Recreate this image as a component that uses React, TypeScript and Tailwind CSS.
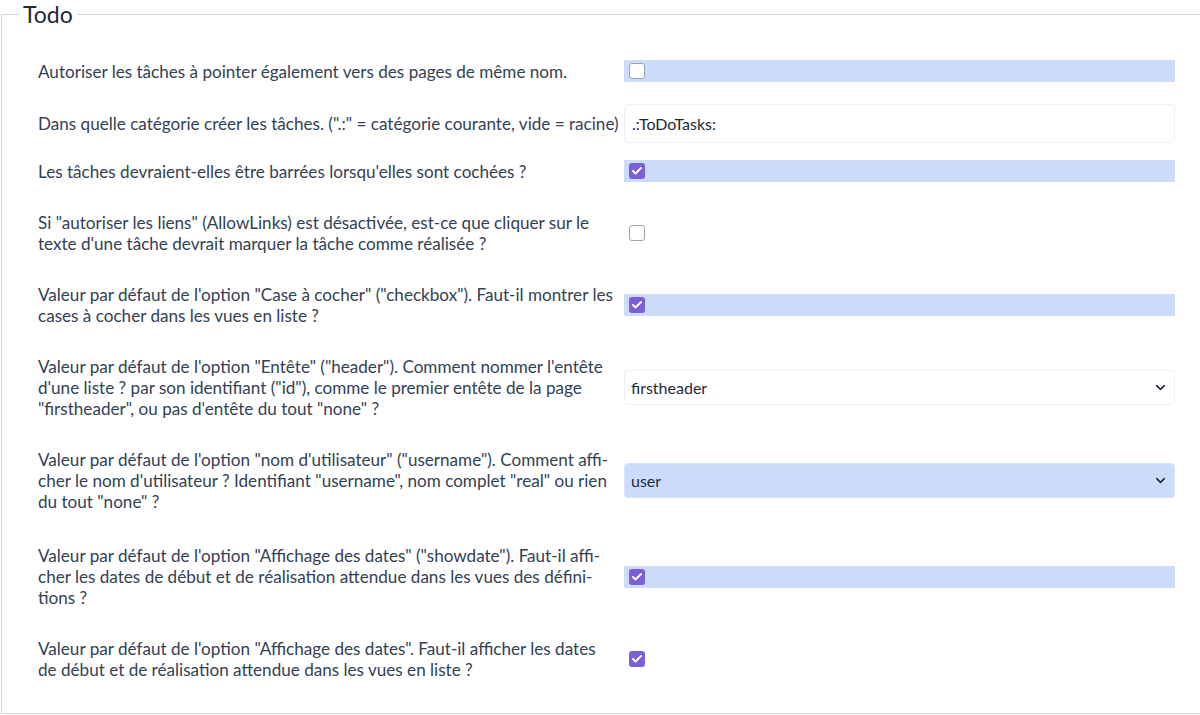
import { Check, ChevronDown } from "lucide-react";

type Row = {
  label: string;
  kind: "check" | "text" | "select";
  value?: string;
  checked?: boolean;
  tinted?: boolean;
  pad: string;
  labelW?: string;
};

const rows: Row[] = [
  { label: "Autoriser les tâches à pointer également vers des pages de même nom.", kind: "check", checked: false, tinted: true, pad: "pt-[45px] pb-[15px]" },
  { label: "Dans quelle catégorie créer les tâches. (\".:\" = catégorie courante, vide = racine)", kind: "text", value: ".:ToDoTasks:", pad: "pt-[16px] pb-[11px]" },
  { label: "Les tâches devraient-elles être barrées lorsqu'elles sont cochées ?", kind: "check", checked: true, tinted: true, pad: "py-[15px]" },
  { label: "Si \"autoriser les liens\" (AllowLinks) est désactivée, est-ce que cliquer sur le texte d'une tâche devrait marquer la tâche comme réalisée ?", kind: "check", checked: false, pad: "py-[15px]" },
  { label: "Valeur par défaut de l'option \"Case à cocher\" (\"checkbox\"). Faut-il montrer les cases à cocher dans les vues en liste ?", kind: "check", checked: true, tinted: true, pad: "py-[15px]" },
  { label: "Valeur par défaut de l'option \"Entête\" (\"header\"). Comment nommer l'entête d'une liste ? par son identifiant (\"id\"), comme le premier entête de la page \"firstheader\", ou pas d'entête du tout \"none\" ?", kind: "select", value: "firstheader", pad: "py-[15px]" },
  { label: "Valeur par défaut de l'option \"nom d'utilisateur\" (\"username\"). Comment affi\u00ADcher le nom d'utilisateur ? Identifiant \"username\", nom complet \"real\" ou rien du tout \"none\" ?", kind: "select", value: "user", tinted: true, pad: "py-[15px]" },
  { label: "Valeur par défaut de l'option \"Affichage des dates\" (\"showdate\"). Faut-il affi\u00ADcher les dates de début et de réalisation attendue dans les vues des défini\u00ADtions ?", kind: "check", checked: true, tinted: true, pad: "pt-[18px] pb-[15px]", labelW: "w-[584px] mr-[8px]" },
  { label: "Valeur par défaut de l'option \"Affichage des dates\". Faut-il afficher les dates de début et de réalisation attendue dans les vues en liste ?", kind: "check", checked: true, pad: "py-[15px]", labelW: "w-[570px] mr-[22px]" },
];

function Box({ checked }: { checked?: boolean }) {
  if (checked) {
    return (
      <span className="w-4 h-4 rounded-[3px] bg-[#7b5fd9] flex items-center justify-center">
        <Check size={12} strokeWidth={4} className="text-white" />
      </span>
    );
  }
  return <span className="w-4 h-4 rounded-[3px] bg-white border border-[#9ca3af]" />;
}

function Control({ row }: { row: Row }) {
  if (row.kind === "check") {
    return (
      <div className={`h-[22px] flex items-center pl-[5px] ${row.tinted ? "bg-[#cddcfd]" : ""}`}>
        <Box checked={row.checked} />
      </div>
    );
  }
  if (row.kind === "text") {
    return (
      <div className="-my-[9px] h-[39px] flex items-center px-[7px] bg-white border border-[#eef0f4] rounded-[4px] text-[16px] text-[#1f2937]">
        {row.value}
      </div>
    );
  }
  return (
    <div className={`-my-[7px] h-[35px] flex items-center justify-between pl-[6px] pr-[6px] rounded-[4px] border text-[16px] text-[#1f2937] ${row.tinted ? "bg-[#cddcfd] border-[#d8e3fd]" : "bg-white border-[#eef0f4]"}`}>
      <span>{row.value}</span>
      <ChevronDown size={15} strokeWidth={2.5} className="text-[#1f2937]" />
    </div>
  );
}

export default function App() {
  return (
    <div className="w-[1200px] h-[715px] overflow-hidden bg-white font-['Lato',sans-serif]">
      <div className="relative mt-[14px] ml-[1px] w-[1210px] h-[700px] border border-[#d4d4d4]">
        <div className="absolute -top-[15px] left-[17px] px-[4px] bg-white text-[23px] leading-[28px] text-[#1f2937]">
          Todo
        </div>
        <div className="flex flex-col pl-[36px] pr-[35px] text-[17.1px] leading-[21px] text-[#334155]" lang="fr">
          {rows.map((row, i) => (
            <div key={i} className={`flex items-center ${row.pad}`}>
              <div className={`shrink-0 ${row.labelW ?? "w-[592px]"}`}>{row.label}</div>
              <div className="w-[551px] shrink-0 -ml-[6px]">
                <Control row={row} />
              </div>
            </div>
          ))}
        </div>
      </div>
    </div>
  );
}
